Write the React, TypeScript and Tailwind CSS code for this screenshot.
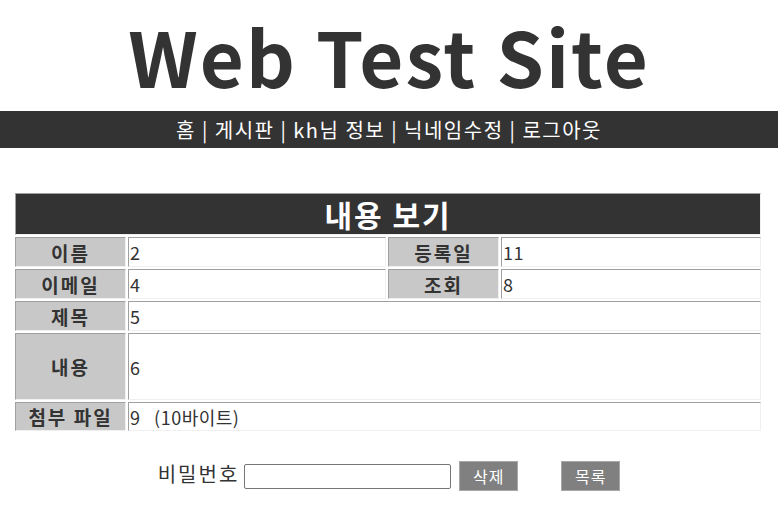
const font = { fontFamily: '"Noto Sans CJK KR", "Noto Sans", sans-serif' };

const Label = ({ children, rowSpan }: { children: React.ReactNode; rowSpan?: number }) => (
    <th
        rowSpan={rowSpan}
        className="bg-[#c8c8c8] text-[#333] text-[19px] tracking-[2px] font-bold text-center border border-t-[#a0a0a0] border-l-[#a0a0a0] border-b-[#f0f0f0] border-r-[#f0f0f0] p-0 leading-none"
    >
        {children}
    </th>
);

const Value = ({ children, colSpan }: { children: React.ReactNode; colSpan?: number }) => (
    <td
        colSpan={colSpan}
        className="bg-white text-[#333] text-[18px] tracking-[0.5px] text-left border border-t-[#a0a0a0] border-l-[#a0a0a0] border-b-[#f0f0f0] border-r-[#f0f0f0] pl-[1px] py-0 leading-none"
    >
        {children}
    </td>
);

const App = () => {
    return (
        <div className="w-[778px] h-[531px] bg-white overflow-hidden" style={font}>
            <header className="h-[111px] flex items-start justify-center">
                <h1 className="text-[76px] font-bold text-[#333] leading-[111px] tracking-[2px]">
                    Web Test Site
                </h1>
            </header>
            <nav className="h-[37px] bg-[#333] flex items-center justify-center text-white text-[20px] tracking-[1.5px]">
                홈 | 게시판 | kh님 정보 | 닉네임수정 | 로그아웃
            </nav>
            <div className="pt-[43px] pl-[13px]">
                <table className="w-[750px] border-separate border-spacing-[2px] table-fixed">
                    <colgroup>
                        <col className="w-[111px]" />
                        <col className="w-[258px]" />
                        <col className="w-[111px]" />
                        <col />
                    </colgroup>
                    <tbody>
                        <tr className="h-[42px]">
                            <th
                                colSpan={4}
                                className="bg-[#333] text-white text-[30px] tracking-[2px] font-bold text-center border border-t-[#a0a0a0] border-l-[#a0a0a0] border-b-[#f0f0f0] border-r-[#f0f0f0] p-0 leading-none"
                            >
                                내용 보기
                            </th>
                        </tr>
                        <tr className="h-[30px]">
                            <Label>이름</Label>
                            <Value>2</Value>
                            <Label>등록일</Label>
                            <Value>11</Value>
                        </tr>
                        <tr className="h-[30px]">
                            <Label>이메일</Label>
                            <Value>4</Value>
                            <Label>조회</Label>
                            <Value>8</Value>
                        </tr>
                        <tr className="h-[30px]">
                            <Label>제목</Label>
                            <Value colSpan={3}>5</Value>
                        </tr>
                        <tr className="h-[67px]">
                            <Label>내용</Label>
                            <Value colSpan={3}>6</Value>
                        </tr>
                        <tr className="h-[29px]">
                            <Label>첨부 파일</Label>
                            <Value colSpan={3}>9 &nbsp;&nbsp;(10바이트)</Value>
                        </tr>
                    </tbody>
                </table>
            </div>
            <div className="mt-[28px] flex items-center justify-center text-[#333]">
                <span className="text-[20px] tracking-[2px] -mt-[4px]">비밀번호</span>
                <input
                    type="password"
                    className="ml-[5px] w-[207px] h-[25px] border border-[#767676] rounded-[2px] bg-white"
                />
                <button className="ml-[8px] w-[59px] h-[30px] bg-[#808080] border border-[#a8a8a8] text-white text-[16px] tracking-[1px]">
                    삭제
                </button>
                <button className="ml-[43px] w-[59px] h-[30px] bg-[#808080] border border-[#a8a8a8] text-white text-[16px] tracking-[1px]">
                    목록
                </button>
            </div>
        </div>
    );
};

export default App;
